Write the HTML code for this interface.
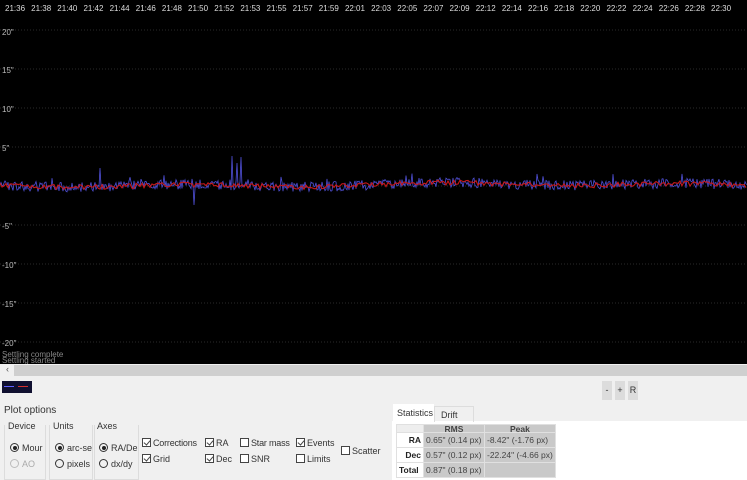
<!DOCTYPE html>
<html><head><meta charset="utf-8"><style>
*{margin:0;padding:0;box-sizing:border-box}
html,body{width:747px;height:480px;overflow:hidden}
body{background:#f0f0f0;font-family:"Liberation Sans",sans-serif;position:relative;color:#222}
.a{position:absolute;white-space:nowrap}
#chart{left:0;top:0;width:747px;height:364px;background:#000}
.s{font-size:9px;color:#333}
.grp{position:absolute;border:1px solid #dcdcdc;border-top:none}
.rb{display:inline-block;width:9px;height:9px;border:1px solid #333;border-radius:50%;vertical-align:-1px;margin-right:3px;position:relative}
.rb.on:after{content:"";position:absolute;left:1.5px;top:1.5px;width:4px;height:4px;border-radius:50%;background:#222}
.cb{display:inline-block;width:9px;height:9px;border:1px solid #444;vertical-align:-1px;margin-right:2px;position:relative;background:#fff}
.cb.on:after{content:"";position:absolute;left:2px;top:0px;width:3px;height:5px;border:solid #444;border-width:0 1px 1px 0;transform:rotate(40deg)}
.btn{position:absolute;top:381px;width:10px;height:19px;background:#dcdcdc;font-size:9px;text-align:center;line-height:19px;color:#333}
table{border-collapse:collapse;font-size:8.5px;white-space:nowrap}
td{height:15px;padding:0 2px;border:1px solid #e0e0e0;color:#444;white-space:nowrap}
td.g{background:#c9c9c9}
</style></head><body>
<div id="chart" class="a">
<svg width="747" height="364" id="sv">
<g stroke="#555" stroke-dasharray="1,2" stroke-width="0.6">
<line x1="0" x2="747" y1="30" y2="30"/><line x1="0" x2="747" y1="69" y2="69"/><line x1="0" x2="747" y1="108" y2="108"/><line x1="0" x2="747" y1="147" y2="147"/><line x1="0" x2="747" y1="186" y2="186"/><line x1="0" x2="747" y1="225" y2="225"/><line x1="0" x2="747" y1="264" y2="264"/><line x1="0" x2="747" y1="303" y2="303"/><line x1="0" x2="747" y1="342" y2="342"/>
</g>
<g fill="#bbb" font-size="8" font-family="Liberation Sans">
<text x="2" y="35">20"</text><text x="2" y="73">15"</text><text x="2" y="112">10"</text><text x="2" y="151">5"</text><text x="2" y="229">-5"</text><text x="2" y="268">-10"</text><text x="2" y="307">-15"</text><text x="2" y="346">-20"</text>
<text x="2" y="357" fill="#888">Settling complete</text><text x="2" y="363" fill="#888">Settling started</text>
</g>
<g id="tl" fill="#ddd" font-size="8" font-family="Liberation Sans"></g>
<polyline id="pb" fill="none" stroke="#5050d8" stroke-width="0.8"/>
<polyline id="pr" fill="none" stroke="#c81818" stroke-width="1.1"/>
</svg>
</div>
<script>
(function(){
var lab=["21:36","21:38","21:40","21:42","21:44","21:46","21:48","21:50","21:52","21:53","21:55","21:57","21:59","22:01","22:03","22:05","22:07","22:09","22:12","22:14","22:16","22:18","22:20","22:22","22:24","22:26","22:28","22:30"];
var g=document.getElementById("tl"),h="";
for(var i=0;i<lab.length;i++){h+='<text x="'+(5+i*26.15)+'" y="11">'+lab[i]+'</text>';}
g.innerHTML=h;
var s=7;function r(){s=(s*9301+49297)%233280;return s/233280;}
var b=[],rr=[];
for(var x=0;x<=747;x+=1){
var base=185+Math.sin(x/40)*1.5+Math.sin(x/110)*1.2;
var y=base+(r()-0.5)*10;
if(Math.abs(x-232)<1)y=156;if(Math.abs(x-241)<1)y=157;if(Math.abs(x-237)<1)y=163;if(Math.abs(x-194)<1)y=205;if(Math.abs(x-100)<1)y=168;if(r()<0.02)y=base-6*r()-5;
b.push(x+","+y.toFixed(1));
if(x%2==0)rr.push(x+","+(base+(r()-0.5)*5).toFixed(1));
}
document.getElementById("pb").setAttribute("points",b.join(" "));
document.getElementById("pr").setAttribute("points",rr.join(" "));
})();
</script>
<div class="a" style="left:14px;top:365px;width:733px;height:11px;background:#cfcfcf"></div>
<div class="a" style="left:6px;top:364px;font-size:9px;color:#555">‹</div>
<div class="a" style="left:2px;top:381px;width:30px;height:12px;background:#101030"><div class="a" style="left:2px;top:5px;width:10px;height:1px;background:#6060ff"></div><div class="a" style="left:16px;top:5px;width:10px;height:1px;background:#d03030"></div></div>
<div class="btn" style="left:602px">-</div><div class="btn" style="left:615px">+</div><div class="btn" style="left:628px">R</div>
<div class="a s" style="left:4px;top:405px;font-size:10px">Plot options</div>
<div class="grp" style="left:4px;top:425px;width:42px;height:55px"></div>
<div class="grp" style="left:49px;top:425px;width:44px;height:55px"></div>
<div class="grp" style="left:94px;top:425px;width:45px;height:55px"></div>
<div class="a s" style="left:8px;top:421px">Device</div>
<div class="a s" style="left:53px;top:421px">Units</div>
<div class="a s" style="left:97px;top:421px">Axes</div>
<div class="a s" style="left:10px;top:443px"><span class="rb on"></span>Mour</div>
<div class="a s" style="left:10px;top:459px;color:#aaa"><span class="rb" style="border-color:#bbb"></span>AO</div>
<div class="a s" style="left:55px;top:443px"><span class="rb on"></span>arc-se</div>
<div class="a s" style="left:55px;top:459px"><span class="rb"></span>pixels</div>
<div class="a s" style="left:99px;top:443px"><span class="rb on"></span>RA/De</div>
<div class="a s" style="left:99px;top:459px"><span class="rb"></span>dx/dy</div>
<div class="a s" style="left:142px;top:438px;letter-spacing:-0.2px"><span class="cb on"></span>Corrections</div>
<div class="a s" style="left:142px;top:454px"><span class="cb on"></span>Grid</div>
<div class="a s" style="left:205px;top:438px"><span class="cb on"></span>RA</div>
<div class="a s" style="left:205px;top:454px"><span class="cb on"></span>Dec</div>
<div class="a s" style="left:240px;top:438px;letter-spacing:-0.2px"><span class="cb"></span>Star mass</div>
<div class="a s" style="left:240px;top:454px"><span class="cb"></span>SNR</div>
<div class="a s" style="left:296px;top:438px"><span class="cb on"></span>Events</div>
<div class="a s" style="left:296px;top:454px"><span class="cb"></span>Limits</div>
<div class="a s" style="left:341px;top:446px"><span class="cb"></span>Scatter</div>
<div class="a" style="left:392px;top:421px;width:355px;height:59px;background:#fff"></div>
<div class="a s" style="left:393px;top:404px;width:41px;height:18px;background:#fff;padding:4px 0 0 4px;font-size:9px">Statistics</div>
<div class="a s" style="left:434px;top:406px;width:40px;height:16px;border:1px solid #ddd;border-bottom:none;padding:3px 0 0 6px;font-size:9px">Drift</div>
<table class="a" style="left:396px;top:424px">
<tr><td style="width:27px;height:8px;background:#eee"></td><td class="g" style="width:61px;height:8px;text-align:center;font-weight:bold;line-height:6px">RMS</td><td class="g" style="width:69px;height:8px;text-align:center;font-weight:bold;line-height:6px">Peak</td></tr>
<tr><td style="font-weight:bold;text-align:right;color:#222">RA</td><td class="g">0.65" (0.14 px)</td><td class="g">-8.42" (-1.76 px)</td></tr>
<tr><td style="font-weight:bold;text-align:right;color:#222">Dec</td><td class="g">0.57" (0.12 px)</td><td class="g">-22.24" (-4.66 px)</td></tr>
<tr><td style="font-weight:bold;color:#222">Total</td><td class="g">0.87" (0.18 px)</td><td class="g"></td></tr>
</table>
</body></html>
